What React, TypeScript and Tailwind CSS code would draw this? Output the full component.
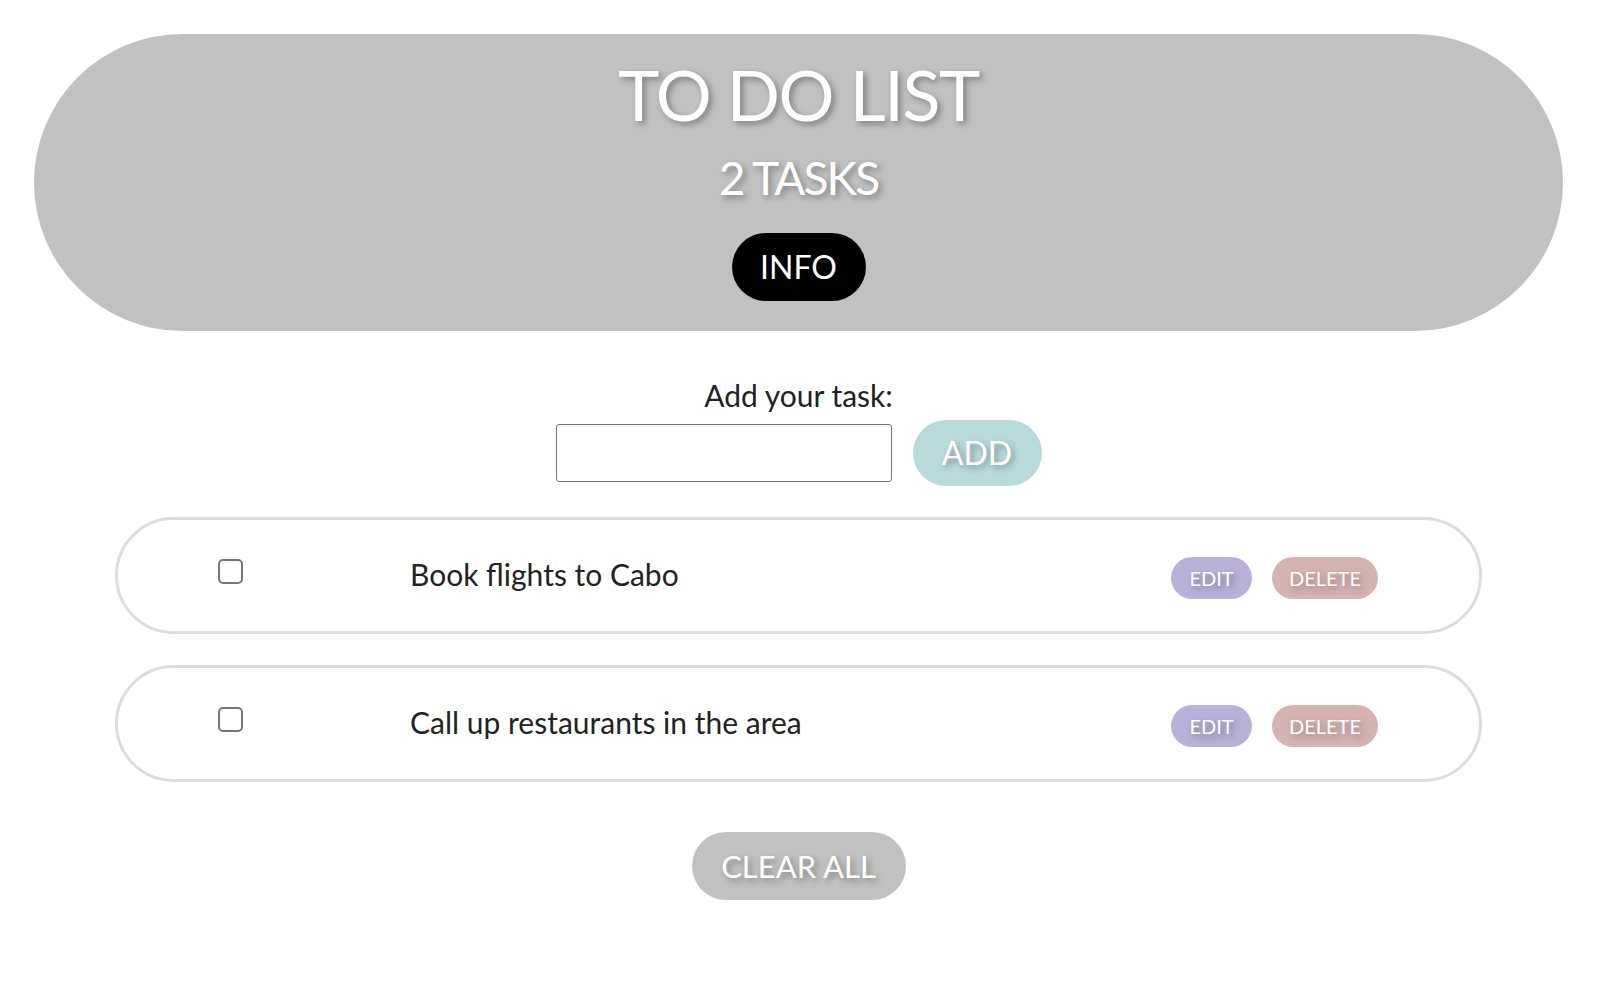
import React from "react";

const tasks = ["Book flights to Cabo", "Call up restaurants in the area"];

const shadow = "[text-shadow:3px_3px_6px_rgba(0,0,0,0.35)]";

const TaskRow = ({ text }: { text: string }) => (
  <div className="mx-[115px] h-[117px] flex items-center rounded-full border-[3px] border-[#dcdcdc] bg-white pl-[100px] pr-[101px]">
    <input type="checkbox" className="h-[25px] w-[25px] -mt-[8px] appearance-none rounded-[5px] border-2 border-[#767676] bg-white" />
    <span className="ml-[167px] text-[30px] text-[#222] -mt-[3px]">{text}</span>
    <div className="ml-auto mt-[5px] flex items-center gap-5">
      <button className={`h-[42px] w-[81px] rounded-full bg-[#b9b1d9] text-[20px] text-white ${shadow}`}>EDIT</button>
      <button className={`h-[42px] w-[106px] rounded-full bg-[#d6b3b3] text-[20px] text-white ${shadow}`}>DELETE</button>
    </div>
  </div>
);

export default function App() {
  return (
    <div className="min-h-[1004px] bg-white pt-[34px] pr-[3px] font-['Lato',sans-serif]">
      {/* header pill */}
      <header className="mx-[34px] h-[297px] rounded-full bg-[#c1c1c1] flex flex-col items-center pt-[18px]">
        <h1 className={`text-[70px] leading-[1.2] tracking-[-0.02em] text-white ${shadow}`}>TO DO LIST</h1>
        <h2 className={`mt-[14px] text-[46px] leading-[1.2] tracking-[-0.04em] text-white ${shadow}`}>2 TASKS</h2>
        <button className="mt-[28px] h-[68px] w-[134px] rounded-full bg-black text-[32px] text-white">INFO</button>
      </header>

      {/* add form */}
      <div className="mt-[46px] flex flex-col items-center">
        <label className="text-[30px] leading-[1.2] text-[#222]">Add your task:</label>
        <div className="mt-[7px] flex items-center gap-[21px]">
          <input type="text" className="h-[58px] w-[336px] rounded-[3px] border border-[#767676] bg-white" />
          <button className={`h-[66px] w-[129px] rounded-full bg-[#b9dadb] text-[32px] text-white ${shadow}`}>ADD</button>
        </div>
      </div>

      {/* tasks */}
      <div className="mt-[31px] flex flex-col gap-[31px]">
        {tasks.map((t) => (
          <TaskRow key={t} text={t} />
        ))}
      </div>

      <div className="mt-[50px] flex justify-center">
        <button className={`h-[68px] w-[214px] rounded-full bg-[#c1c1c1] text-[31px] text-white ${shadow}`}>CLEAR ALL</button>
      </div>
    </div>
  );
}
